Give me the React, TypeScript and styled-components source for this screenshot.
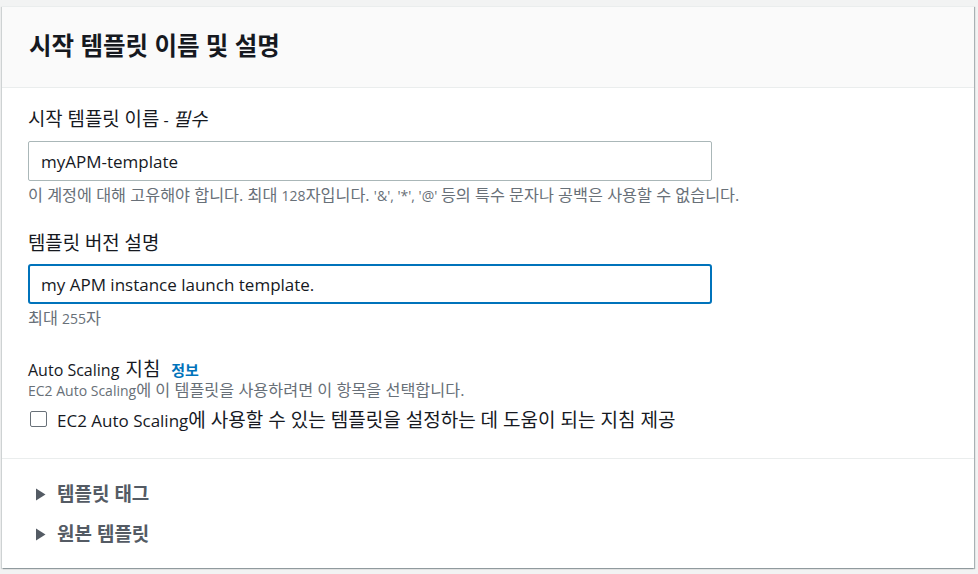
import React from 'react';
import styled, {createGlobalStyle} from 'styled-components';

const GlobalStyle = createGlobalStyle`
html, body {
margin: 0;
padding: 0;
background: #f2f3f3;
font-family: "Open Sans", "Noto Sans CJK KR", sans-serif;
color: #16191f;
}
`;

const Page = styled.div`
width: 978px;
height: 574px;
padding: 6px 4px 0 2px;
box-sizing: border-box;
`;

const Card = styled.div`
background: #ffffff;
border-top: 1px solid #eaeded;
box-shadow: 1px 1px 1px 0 rgba(0, 28, 36, 0.3), -1px 1px 1px 0 rgba(0, 28, 36, 0.15);
height: 562px;
box-sizing: border-box;
display: flex;
flex-direction: column;
`;

const Header = styled.div`
background: #fafafa;
border-bottom: 1px solid #eaeded;
height: 81px;
box-sizing: border-box;
padding: 0 0 0 27px;
display: flex;
align-items: center;
`;

const Title = styled.h2`
margin: 0 0 5px 0;
font-size: 24.5px;
font-weight: 700;
color: #16191f;
`;

// Korean runs are drawn a little larger than the Latin text around them
const Ko = styled.span<{$s?: number}>`
font-size: ${p => p.$s ?? 1.18}em;
`;

const Body = styled.div`
padding: 19px 26px 27px 26px;
display: flex;
flex-direction: column;
border-bottom: 1px solid #eaeded;
`;

const Field = styled.div<{$gap?: number}>`
display: flex;
flex-direction: column;
margin-bottom: ${p => p.$gap ?? 0}px;
`;

const Label = styled.label`
font-size: 16px;
line-height: 24px;
height: 24px;
color: #16191f;
`;

const Required = styled.span`
font-style: italic;
`;

const Info = styled.a`
color: #0073bb;
font-size: 15px;
font-weight: 700;
margin-left: 11px;
`;

const Input = styled.div<{$focused?: boolean}>`
width: 684px;
height: 40px;
box-sizing: border-box;
margin-top: ${p => (p.$focused ? 9 : 10)}px;
border: ${p => (p.$focused ? '2px solid #0073bb' : '1px solid #aab7b8')};
border-radius: ${p => (p.$focused ? 3 : 2)}px;
padding: 0 ${p => (p.$focused ? 11 : 12)}px;
display: flex;
align-items: center;
font-size: 17px;
color: #16191f;
`;

const Hint = styled.div<{$top?: number}>`
font-size: 14px;
line-height: 20px;
height: 20px;
color: #687078;
margin-top: ${p => p.$top ?? 4}px;
white-space: nowrap;
`;

const CheckRow = styled.div`
display: flex;
align-items: center;
gap: 10px;
margin-top: 7px;
height: 24px;
font-size: 17px;
white-space: nowrap;
`;

const Box = styled.span`
width: 17px;
height: 16px;
border: 1px solid #687078;
border-radius: 2px;
box-sizing: border-box;
margin-left: 2px;
flex-shrink: 0;
`;

const Expanders = styled.div`
padding: 22px 0 0 33px;
display: flex;
flex-direction: column;
gap: 14px;
`;

const Expander = styled.div`
display: flex;
align-items: center;
gap: 11px;
font-size: 19px;
font-weight: 700;
color: #545b64;
line-height: 26px;
`;

const Caret = () => (
    <svg width='11' height='13' viewBox='0 0 11 13'>
        <path d='M1 0.5 L10.5 6.5 L1 12.5 Z' fill='#545b64'/>
    </svg>
);

export default function App() {
    return (
        <Page>
            <GlobalStyle/>
            <Card>
                <Header>
                    <Title>{'시작 템플릿 이름 및 설명'}</Title>
                </Header>
                <Body>
                    <Field $gap={26}>
                        <Label><Ko>{'시작 템플릿 이름'}</Ko>{' - '}<Required><Ko>{'필수'}</Ko></Required></Label>
                        <Input>{'myAPM-template'}</Input>
                        <Hint>
                            <Ko $s={1.16}>{'이 계정에 대해 고유해야 합니다. 최대 '}</Ko>{'128'}
                            <Ko $s={1.16}>{'자입니다. '}</Ko>{'\'&\', \'*\', \'@\' '}
                            <Ko $s={1.16}>{'등의 특수 문자나 공백은 사용할 수 없습니다.'}</Ko>
                        </Hint>
                    </Field>
                    <Field $gap={27}>
                        <Label><Ko>{'템플릿 버전 설명'}</Ko></Label>
                        <Input $focused={true}>{'my APM instance launch template.'}</Input>
                        <Hint><Ko $s={1.16}>{'최대 '}</Ko>{'255'}<Ko $s={1.16}>{'자'}</Ko></Hint>
                    </Field>
                    <Field>
                        <Label>{'Auto Scaling'}<Ko $s={1.5}>{' '}</Ko><Ko>{'지침'}</Ko><Info>{'정보'}</Info></Label>
                        <Hint $top={1}>
                            {'EC2 Auto Scaling'}<Ko $s={1.16}>{'에 이 템플릿을 사용하려면 이 항목을 선택합니다.'}</Ko>
                        </Hint>
                        <CheckRow>
                            <Box/>
                            <span>
                                {'EC2 Auto Scaling'}
                                <Ko $s={1.12}>{'에 사용할 수 있는 템플릿을 설정하는 데 도움이 되는 지침 제공'}</Ko>
                            </span>
                        </CheckRow>
                    </Field>
                </Body>
                <Expanders>
                    <Expander><Caret/>{'템플릿 태그'}</Expander>
                    <Expander><Caret/>{'원본 템플릿'}</Expander>
                </Expanders>
            </Card>
        </Page>
    );
}
